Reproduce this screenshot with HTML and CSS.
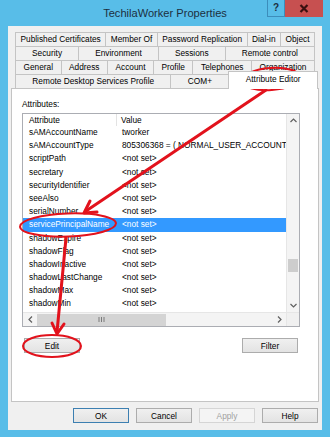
FILE: index.html
```html
<!DOCTYPE html>
<html lang="en">
<head>
    <meta charset="UTF-8">
    <title>TechilaWorker Properties</title>
    <link rel="stylesheet" href="styles.css">
</head>
<body>
<div class="window">
    <div class="titlebar">
        <span></span>
        <div class="title">TechilaWorker Properties</div>
        <div class="caption-buttons">
            <div class="cap-help">?</div>
            <div class="cap-close">
                <svg width="10" height="9" viewBox="0 0 10 9"><path d="M1.5 1 L8.5 8 M8.5 1 L1.5 8" stroke="#3a1010" stroke-width="2.2"/></svg>
            </div>
        </div>
    </div>

    <div class="dialog">
        <div class="tabs">
            <div class="tab-row">
                <div class="tab">Published Certificates</div>
                <div class="tab">Member Of</div>
                <div class="tab">Password Replication</div>
                <div class="tab">Dial-in</div>
                <div class="tab">Object</div>
            </div>
            <div class="tab-row">
                <div class="tab">Security</div>
                <div class="tab">Environment</div>
                <div class="tab">Sessions</div>
                <div class="tab">Remote control</div>
            </div>
            <div class="tab-row">
                <div class="tab">General</div>
                <div class="tab">Address</div>
                <div class="tab">Account</div>
                <div class="tab">Profile</div>
                <div class="tab">Telephones</div>
                <div class="tab">Organization</div>
            </div>
            <div class="tab-row">
                <div class="tab">Remote Desktop Services Profile</div>
                <div class="tab">COM+</div>
                <div class="tab active">Attribute Editor</div>
            </div>
        </div>

        <div class="panel">
            <div class="label">Attributes:</div>
            <div class="listbox">
                <div class="list-main">
                    <div class="list-header">
                        <div class="col-attr">Attribute</div>
                        <div class="col-val">Value</div>
                    </div>
                    <div class="row"><div>sAMAccountName</div><div>tworker</div></div>
                    <div class="row"><div>sAMAccountType</div><div>805306368 = ( NORMAL_USER_ACCOUNT )</div></div>
                    <div class="row"><div>scriptPath</div><div>&lt;not set&gt;</div></div>
                    <div class="row"><div>secretary</div><div>&lt;not set&gt;</div></div>
                    <div class="row"><div>securityIdentifier</div><div>&lt;not set&gt;</div></div>
                    <div class="row"><div>seeAlso</div><div>&lt;not set&gt;</div></div>
                    <div class="row"><div>serialNumber</div><div>&lt;not set&gt;</div></div>
                    <div class="row selected"><div>servicePrincipalName</div><div>&lt;not set&gt;</div></div>
                    <div class="row"><div>shadowExpire</div><div>&lt;not set&gt;</div></div>
                    <div class="row"><div>shadowFlag</div><div>&lt;not set&gt;</div></div>
                    <div class="row"><div>shadowInactive</div><div>&lt;not set&gt;</div></div>
                    <div class="row"><div>shadowLastChange</div><div>&lt;not set&gt;</div></div>
                    <div class="row"><div>shadowMax</div><div>&lt;not set&gt;</div></div>
                    <div class="row"><div>shadowMin</div><div>&lt;not set&gt;</div></div>
                </div>
                <div class="vscroll">
                    <div class="sb-arrow">
                        <svg width="7" height="5" viewBox="0 0 7 5"><polyline points="0.5,4 3.5,1 6.5,4" fill="none" stroke="#606060" stroke-width="1.2"/></svg>
                    </div>
                    <div class="vtrack"><div class="vthumb"></div></div>
                    <div class="sb-arrow">
                        <svg width="7" height="5" viewBox="0 0 7 5"><polyline points="0.5,1 3.5,4 6.5,1" fill="none" stroke="#606060" stroke-width="1.2"/></svg>
                    </div>
                </div>
                <div class="hscroll">
                    <div class="sb-arrow">
                        <svg width="5" height="7" viewBox="0 0 5 7"><polyline points="4,0.5 1,3.5 4,6.5" fill="none" stroke="#606060" stroke-width="1.2"/></svg>
                    </div>
                    <div class="hthumb">
                        <svg width="7" height="5" viewBox="0 0 7 5"><path d="M1 0 V5 M3.5 0 V5 M6 0 V5" stroke="#7a7a7a" stroke-width="1"/></svg>
                    </div>
                    <div class="htrack"></div>
                    <div class="sb-arrow">
                        <svg width="5" height="7" viewBox="0 0 5 7"><polyline points="1,0.5 4,3.5 1,6.5" fill="none" stroke="#606060" stroke-width="1.2"/></svg>
                    </div>
                </div>
                <div class="corner"></div>
            </div>
            <div class="panel-buttons">
                <button class="btn">Edit</button>
                <button class="btn">Filter</button>
            </div>
        </div>

        <div class="dialog-buttons">
            <button class="btn default">OK</button>
            <button class="btn">Cancel</button>
            <button class="btn" disabled>Apply</button>
            <button class="btn">Help</button>
        </div>
    </div>

    <!-- red markup drawn over the screenshot -->
    <svg class="annotations" width="330" height="437" viewBox="0 0 330 437">
        <g fill="none" stroke="#e2121c" stroke-linecap="round" stroke-linejoin="round">
            <ellipse cx="271" cy="79" rx="29" ry="11" stroke-width="2" transform="rotate(-4 271 79)"/>
            <ellipse cx="68" cy="225" rx="48" ry="11.5" stroke-width="2" transform="rotate(-2 68 225)"/>
            <ellipse cx="52" cy="346" rx="29" ry="11" stroke-width="2"/>
            <line x1="266" y1="90" x2="86" y2="211" stroke-width="3"/>
            <polyline points="90,201 84,213 97,212" stroke-width="3"/>
            <line x1="66" y1="238" x2="57" y2="332" stroke-width="3"/>
            <polyline points="52,323 57,334 64,324" stroke-width="3"/>
        </g>
    </svg>
</div>
</body>
</html>
```

FILE: styles.css
```css
html, body {
    margin: 0;
    background: #58bde8;
}
body {
    font-family: "Liberation Sans", Arial, sans-serif;
    font-size: 8.3px;
    color: #000;
}
.window {
    position: relative;
    width: 330px;
    height: 437px;
    background: #58bde8;
    display: flex;
    flex-direction: column;
}
.titlebar {
    height: 26px;
    display: grid;
    grid-template-columns: 1fr auto 1fr;
}
.title {
    line-height: 26px;
    font-size: 11.1px;
    color: #1c2f40;
}
.caption-buttons {
    display: flex;
    justify-content: flex-end;
    align-items: flex-start;
    margin-right: 7px;
}
.cap-help {
    width: 18px;
    height: 17px;
    box-sizing: border-box;
    border: 1px solid #3c8dbb;
    border-top: none;
    text-align: center;
    line-height: 16px;
    font-weight: bold;
    font-size: 10px;
    color: #1c2f40;
}
.cap-close {
    width: 38px;
    height: 17px;
    background: #c75050;
    display: flex;
    align-items: center;
    justify-content: center;
}
.dialog {
    flex: 1;
    margin: 0 8px 7px 8px;
    background: #f0f0f0;
    padding: 6px 3px 7px 3px;
    display: flex;
    flex-direction: column;
}
.tabs {
    padding: 0 4px;
}
.tab-row {
    display: flex;
    height: 14px;
    align-items: flex-end;
}
.tab {
    flex: 1 1 auto;
    height: 14px;
    box-sizing: border-box;
    border: 1px solid #c4c4c4;
    border-bottom: none;
    margin-left: -1px;
    background: #f0f0f0;
    text-align: center;
    line-height: 13px;
    white-space: nowrap;
}
.tab:first-child {
    margin-left: 0;
}
.tab.active {
    height: 18px;
    margin-bottom: -1px;
    margin-right: -3px;
    background: #fff;
    line-height: 15px;
    position: relative;
    z-index: 1;
}
.panel {
    flex: 1;
    background: #fff;
    border: 1px solid #c4c4c4;
    padding: 9px 18px 0 10px;
}
.label {
    line-height: 12px;
    margin-bottom: 3px;
}
.listbox {
    height: 214px;
    box-sizing: border-box;
    border: 1px solid #abadb3;
    display: grid;
    grid-template-columns: 1fr 13px;
    grid-template-rows: 1fr 14px;
}
.list-main {
    overflow: hidden;
}
.list-header {
    display: grid;
    grid-template-columns: 94px 1fr;
    height: 12px;
    line-height: 12px;
}
.list-header .col-attr {
    padding-left: 6px;
    border-right: 1px solid #e3e3e3;
}
.list-header .col-val {
    padding-left: 4px;
}
.row {
    display: grid;
    grid-template-columns: 94px 1fr;
    height: 13.2px;
    line-height: 13.2px;
    white-space: nowrap;
}
.row div {
    overflow: hidden;
}
.row div:first-child {
    padding-left: 6px;
}
.row div:last-child {
    padding-left: 5px;
}
.row.selected {
    background: #3399ff;
    color: #fff;
}
.vscroll {
    background: #f4f4f4;
    border-left: 1px solid #e6e6e6;
    display: flex;
    flex-direction: column;
}
.sb-arrow {
    width: 13px;
    height: 13px;
    display: flex;
    align-items: center;
    justify-content: center;
    flex: none;
}
.vtrack {
    flex: 1;
}
.vthumb {
    margin: 132px 1px 0 1px;
    height: 13px;
    background: #cdcdcd;
}
.hscroll {
    background: #f4f4f4;
    border-top: 1px solid #e6e6e6;
    display: flex;
    align-items: center;
}
.hscroll .sb-arrow {
    width: 14px;
}
.hthumb {
    width: 129px;
    height: 12px;
    background: #d4d4d4;
    display: flex;
    align-items: center;
    justify-content: center;
}
.htrack {
    flex: 1;
}
.corner {
    background: #f0f0f0;
    border-top: 1px solid #e6e6e6;
    border-left: 1px solid #e6e6e6;
}
.panel-buttons {
    display: flex;
    justify-content: space-between;
    margin-top: 11px;
    padding: 0 2px;
}
.btn {
    width: 56px;
    height: 15px;
    padding: 0;
    box-sizing: border-box;
    border: 1px solid #acacac;
    background: linear-gradient(#f0f0f0, #e3e3e3);
    font-family: "Liberation Sans", Arial, sans-serif;
    font-size: 8.3px;
    color: #000;
}
.btn.default {
    border-color: #3c7fb1;
}
.btn:disabled {
    border-color: #d5d5d5;
    background: #f4f4f4;
    color: #a0a0a0;
}
.dialog-buttons {
    display: flex;
    justify-content: flex-end;
    gap: 7px;
    margin-top: 6px;
    padding-right: 1px;
}
.annotations {
    position: absolute;
    top: 0;
    left: 0;
    pointer-events: none;
}
```
